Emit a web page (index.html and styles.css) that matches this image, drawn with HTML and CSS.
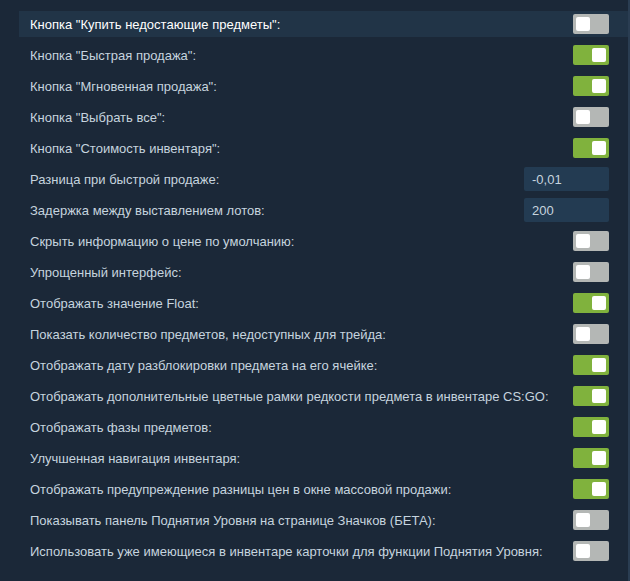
FILE: index.html
```html
<!DOCTYPE html>
<html lang="ru">
<head>
<meta charset="utf-8">
<link rel="stylesheet" href="styles.css">
</head>
<body>
<div class="page">
  <div class="list">
    <div class="row hover"><span class="label">Кнопка "Купить недостающие предметы":</span><span class="toggle"></span></div>
    <div class="row"><span class="label">Кнопка "Быстрая продажа":</span><span class="toggle on"></span></div>
    <div class="row"><span class="label">Кнопка "Мгновенная продажа":</span><span class="toggle on"></span></div>
    <div class="row"><span class="label">Кнопка "Выбрать все":</span><span class="toggle"></span></div>
    <div class="row"><span class="label">Кнопка "Стоимость инвентаря":</span><span class="toggle on"></span></div>
    <div class="row"><span class="label">Разница при быстрой продаже:</span><span class="input">-0,01</span></div>
    <div class="row"><span class="label">Задержка между выставлением лотов:</span><span class="input">200</span></div>
    <div class="row"><span class="label">Скрыть информацию о цене по умолчанию:</span><span class="toggle"></span></div>
    <div class="row"><span class="label">Упрощенный интерфейс:</span><span class="toggle"></span></div>
    <div class="row"><span class="label">Отображать значение Float:</span><span class="toggle on"></span></div>
    <div class="row"><span class="label">Показать количество предметов, недоступных для трейда:</span><span class="toggle"></span></div>
    <div class="row"><span class="label">Отображать дату разблокировки предмета на его ячейке:</span><span class="toggle on"></span></div>
    <div class="row"><span class="label">Отображать дополнительные цветные рамки редкости предмета в инвентаре CS:GO:</span><span class="toggle on"></span></div>
    <div class="row"><span class="label">Отображать фазы предметов:</span><span class="toggle on"></span></div>
    <div class="row"><span class="label">Улучшенная навигация инвентаря:</span><span class="toggle on"></span></div>
    <div class="row"><span class="label">Отображать предупреждение разницы цен в окне массовой продажи:</span><span class="toggle on"></span></div>
    <div class="row"><span class="label">Показывать панель Поднятия Уровня на странице Значков (БЕТА):</span><span class="toggle"></span></div>
    <div class="row"><span class="label">Использовать уже имеющиеся в инвентаре карточки для функции Поднятия Уровня:</span><span class="toggle"></span></div>
  </div>
  <div class="edge"></div>
</div>
</body>
</html>
```
FILE: styles.css
```css
html, body {
  margin: 0;
  padding: 0;
  background: #1b2838;
}
.page {
  display: flex;
  width: 630px;
  height: 581px;
  overflow: hidden;
}
.list {
  flex: 1;
  display: flex;
  flex-direction: column;
  gap: 5px;
  padding: 11px 0 0 19px;
}
.edge {
  width: 2px;
  background: #2a3d52;
}
.row {
  height: 26px;
  display: flex;
  align-items: center;
  justify-content: space-between;
  padding: 0 19px 0 11px;
  font-family: "Liberation Sans", Arial, sans-serif;
  font-size: 13px;
  color: #c6d4df;
}
.row.hover {
  background: #213447;
  color: #ffffff;
}
.toggle {
  width: 36px;
  height: 20px;
  box-sizing: border-box;
  border-radius: 2px;
  background: #b4b7b5;
  padding: 3px;
  display: flex;
  justify-content: flex-start;
}
.toggle::after {
  content: "";
  width: 14px;
  height: 14px;
  background: #ffffff;
  border-radius: 2px;
}
.toggle.on {
  background: #80b23d;
  justify-content: flex-end;
}
.input {
  width: 85px;
  height: 24px;
  box-sizing: border-box;
  padding-left: 8px;
  display: flex;
  align-items: center;
  background: #233b52;
  border-radius: 2px;
  color: #c6d4df;
  font-size: 13px;
}
```
